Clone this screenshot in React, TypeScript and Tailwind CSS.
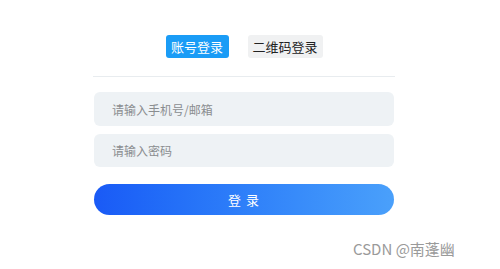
import React from "react";

const App = () => {
  return (
    <div
      className="relative w-[500px] h-[269px] bg-white overflow-hidden"
      style={{ fontFamily: '"Noto Sans CJK SC", "Liberation Sans", sans-serif' }}
    >
      <div className="w-[302px] ml-[93px] pt-[35px]">
        <div className="flex justify-center gap-[19px]">
          <button className="h-[23px] w-[63px] rounded-[3px] bg-[#1a9cf6] text-white text-[13px] leading-[23px]">
            账号登录
          </button>
          <button className="h-[23px] w-[75px] rounded-[3px] bg-[#f0f1f2] text-[#222] text-[13px] leading-[23px]">
            二维码登录
          </button>
        </div>
        <div className="mt-[18px] border-t border-[#e8ecef]" />
        <div className="mt-[15px] pl-[1px] flex flex-col gap-[8px]">
          <input
            className="h-[34px] w-[300px] rounded-[6px] bg-[#eef2f5] pl-[18px] text-[12px] outline-none placeholder:text-[#8a8d90]"
            placeholder="请输入手机号/邮箱"
          />
          <input
            type="password"
            className="h-[33px] w-[300px] rounded-[6px] bg-[#eef2f5] pl-[18px] text-[12px] outline-none placeholder:text-[#8a8d90]"
            placeholder="请输入密码"
          />
        </div>
        <button className="mt-[17px] ml-[1px] h-[31px] w-[300px] rounded-full bg-gradient-to-r from-[#1a5af6] to-[#4aa0fb] text-white text-[13px] tracking-[1px]">
          登 录
        </button>
      </div>
      <div className="absolute left-[353px] top-[238px] text-[15px] text-[#9a9a9a]">
        CSDN @南蓬幽
      </div>
    </div>
  );
};

export default App;
